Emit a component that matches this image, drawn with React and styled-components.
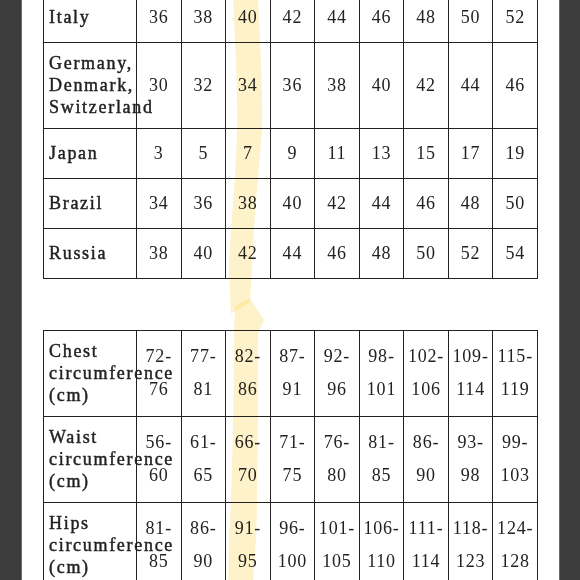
import React from "react";
import styled, { createGlobalStyle } from "styled-components";

const GlobalStyle = createGlobalStyle`
  html, body {
    margin: 0;
    padding: 0;
    background: #3d3d3d;
  }
`;

const Page = styled.div`
  position: relative;
  width: 580px;
  height: 580px;
  overflow: hidden;
  display: flex;
  background: #3d3d3d;
`;

const SideBar = styled.div`
  width: ${(p) => p.w}px;
  flex-shrink: 0;
  background: #3d3d3d;
  border-${(p) => p.edge}: 1px solid #6a6a6a;
  box-sizing: border-box;
`;

const Sheet = styled.div`
  flex: 1;
  background: #fff;
  padding: 0 21px;
  display: flex;
  flex-direction: column;
  gap: 51px;
`;

const SizeTable = styled.table`
  width: 495px;
  border-collapse: collapse;
  table-layout: fixed;
  margin-top: ${(p) => p.offset || 0}px;
  border: 1px solid #444;
  font-family: "Liberation Serif", "DejaVu Serif", serif;
  font-size: 18px;
  color: #222;
`;

const Row = styled.tr`
  height: ${(p) => p.h}px;
`;

const Label = styled.td`
  border: 1px solid #222;
  padding: 9.5px 0 9.5px 5px;
  line-height: 22px;
  font-weight: normal;
  -webkit-text-stroke: 0.45px #222;
  letter-spacing: 1.7px;
  vertical-align: middle;
  white-space: normal;
  overflow: visible;
`;

const Num = styled.td`
  border: 1px solid #222;
  padding: 0 2px;
  text-align: center;
  vertical-align: middle;
  letter-spacing: 0.8px;
  line-height: ${(p) => (p.range ? 33 : 22)}px;
`;

const Highlight = styled.svg`
  position: absolute;
  left: 0;
  top: 0;
  pointer-events: none;
  mix-blend-mode: multiply;
`;

const sizes = [
  ["Italy", [36, 38, 40, 42, 44, 46, 48, 50, 52]],
  ["Germany, Denmark, Switzerland", [30, 32, 34, 36, 38, 40, 42, 44, 46]],
  ["Japan", [3, 5, 7, 9, 11, 13, 15, 17, 19]],
  ["Brazil", [34, 36, 38, 40, 42, 44, 46, 48, 50]],
  ["Russia", [38, 40, 42, 44, 46, 48, 50, 52, 54]],
];

const measures = [
  ["Chest circumference (cm)", ["72-76", "77-81", "82-86", "87-91", "92-96", "98-101", "102-106", "109-114", "115-119"]],
  ["Waist circumference (cm)", ["56-60", "61-65", "66-70", "71-75", "76-80", "81-85", "86-90", "93-98", "99-103"]],
  ["Hips circumference (cm)", ["81-85", "86-90", "91-95", "96-100", "101-105", "106-110", "111-114", "118-123", "124-128"]],
];

const Cols = () => (
  <colgroup>
    <col style={{ width: 93 }} />
    {Array.from({ length: 9 }).map((_, i) => (
      <col key={i} />
    ))}
  </colgroup>
);

const App = () => {
  return (
    <Page>
      <GlobalStyle />
      <SideBar w={22} edge="right" />
      <Sheet>
        <SizeTable offset={-8.5}>
          <Cols />
          <tbody>
            {sizes.map(([name, vals]) => (
              <Row h={50} key={name}>
                <Label>{name}</Label>
                {vals.map((v, i) => (
                  <Num key={i}>{v}</Num>
                ))}
              </Row>
            ))}
          </tbody>
        </SizeTable>
        <SizeTable>
          <Cols />
          <tbody>
            {measures.map(([name, vals]) => (
              <Row h={85} key={name}>
                <Label>{name}</Label>
                {vals.map((v, i) => {
                  const [a, b] = v.split("-");
                  return (
                    <Num range key={i}>
                      {a}-
                      <br />
                      {b}
                    </Num>
                  );
                })}
              </Row>
            ))}
          </tbody>
        </SizeTable>
      </Sheet>
      <SideBar w={21} edge="left" />
      <Highlight width="580" height="580" viewBox="0 0 580 580">
        <path
          d="M233,-2 C236,60 238,100 237,130 C236,180 230,230 229,270 L231,314 L250,302 L252,270 C253,230 258,180 262,130 C263,90 260,40 258,-2 Z"
          fill="rgba(253, 214, 90, 0.32)"
        />
        <path
          d="M235,306 L250,298 L264,320 L258,334 C258,380 258,450 257,500 C257,540 254,560 253,585 L228,585 C229,540 230,520 231,500 C233,450 234,380 234,334 Z"
          fill="rgba(253, 214, 90, 0.32)"
        />
      </Highlight>
    </Page>
  );
};

export default App;
